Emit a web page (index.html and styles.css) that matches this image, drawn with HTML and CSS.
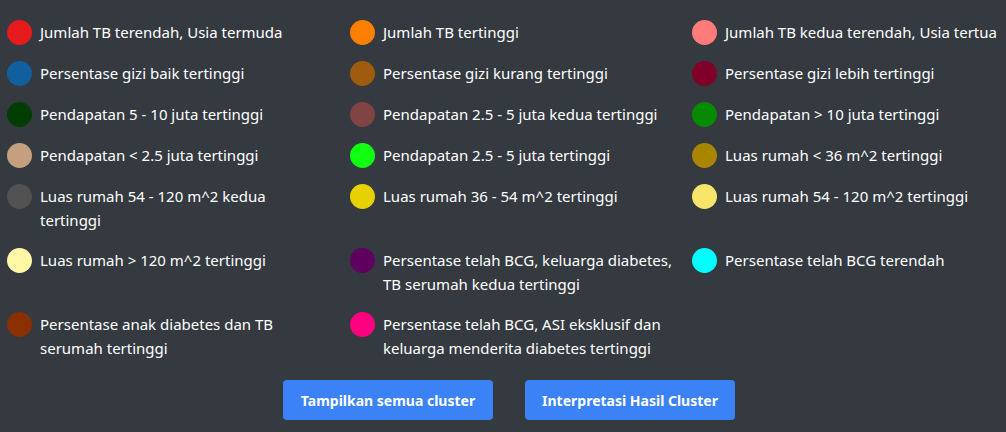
FILE: index.html
```html
<!DOCTYPE html>
<html lang="id">
<head>
<meta charset="utf-8">
<title>Legenda Cluster</title>
<link rel="stylesheet" href="styles.css">
</head>
<body>
<div class="legend">
  <div class="item"><span class="dot c1"></span><span class="label">Jumlah TB terendah, Usia termuda</span></div>
  <div class="item"><span class="dot c2"></span><span class="label">Jumlah TB tertinggi</span></div>
  <div class="item"><span class="dot c3"></span><span class="label">Jumlah TB kedua terendah, Usia tertua</span></div>

  <div class="item"><span class="dot c4"></span><span class="label">Persentase gizi baik tertinggi</span></div>
  <div class="item"><span class="dot c5"></span><span class="label">Persentase gizi kurang tertinggi</span></div>
  <div class="item"><span class="dot c6"></span><span class="label">Persentase gizi lebih tertinggi</span></div>

  <div class="item"><span class="dot c7"></span><span class="label">Pendapatan 5 - 10 juta tertinggi</span></div>
  <div class="item"><span class="dot c8"></span><span class="label">Pendapatan 2.5 - 5 juta kedua tertinggi</span></div>
  <div class="item"><span class="dot c9"></span><span class="label">Pendapatan &gt; 10 juta tertinggi</span></div>

  <div class="item"><span class="dot c10"></span><span class="label">Pendapatan &lt; 2.5 juta tertinggi</span></div>
  <div class="item"><span class="dot c11"></span><span class="label">Pendapatan 2.5 - 5 juta tertinggi</span></div>
  <div class="item"><span class="dot c12"></span><span class="label">Luas rumah &lt; 36 m^2 tertinggi</span></div>

  <div class="item"><span class="dot c13"></span><span class="label">Luas rumah 54 - 120 m^2 kedua tertinggi</span></div>
  <div class="item"><span class="dot c14"></span><span class="label">Luas rumah 36 - 54 m^2 tertinggi</span></div>
  <div class="item"><span class="dot c15"></span><span class="label">Luas rumah 54 - 120 m^2 tertinggi</span></div>

  <div class="item"><span class="dot c16"></span><span class="label">Luas rumah &gt; 120 m^2 tertinggi</span></div>
  <div class="item"><span class="dot c17"></span><span class="label">Persentase telah BCG, keluarga diabetes, TB serumah kedua tertinggi</span></div>
  <div class="item"><span class="dot c18"></span><span class="label">Persentase telah BCG terendah</span></div>

  <div class="item"><span class="dot c19"></span><span class="label">Persentase anak diabetes dan TB serumah tertinggi</span></div>
  <div class="item"><span class="dot c20"></span><span class="label">Persentase telah BCG, ASI eksklusif dan keluarga menderita diabetes tertinggi</span></div>
</div>
<div class="actions">
  <button class="btn" type="button">Tampilkan semua cluster</button>
  <button class="btn" type="button">Interpretasi Hasil Cluster</button>
</div>
</body>
</html>
```
FILE: styles.css
```css
html, body {
  margin: 0;
  padding: 0;
  background: #343a40;
}

body {
  font-family: "Noto Sans", "Open Sans", sans-serif;
  font-size: 15px;
  line-height: 24px;
  color: #ffffff;
}

.legend {
  display: grid;
  grid-template-columns: 343px 342px 1fr;
  row-gap: 16px;
  padding: 20px 0 0 7px;
}

.item {
  display: flex;
  align-items: flex-start;
  gap: 8px;
}

.dot {
  flex: 0 0 25px;
  width: 25px;
  height: 25px;
  border-radius: 50%;
}

.label {
  max-width: 289px;
}

.c1 { background: #e41a1c; }
.c2 { background: #ff7f00; }
.c3 { background: #ff7b7b; }
.c4 { background: #125f9f; }
.c5 { background: #9f5b0e; }
.c6 { background: #7f0028; }
.c7 { background: #023d00; }
.c8 { background: #804444; }
.c9 { background: #088a00; }
.c10 { background: #c4a07f; }
.c11 { background: #12ff12; }
.c12 { background: #a98500; }
.c13 { background: #525252; }
.c14 { background: #e8d100; }
.c15 { background: #f7e569; }
.c16 { background: #fff6a6; }
.c17 { background: #5f005f; }
.c18 { background: #00ffff; }
.c19 { background: #8a2f00; }
.c20 { background: #ff007f; }

.actions {
  display: flex;
  justify-content: center;
  gap: 32px;
  padding: 20px 0 0 12px;
}

.btn {
  width: 210px;
  height: 40px;
  padding: 0;
  border: none;
  border-radius: 4px;
  background: #3b82f6;
  color: #ffffff;
  font-family: "Noto Sans", "Open Sans", sans-serif;
  font-size: 14px;
  font-weight: 700;
  cursor: pointer;
}
```
